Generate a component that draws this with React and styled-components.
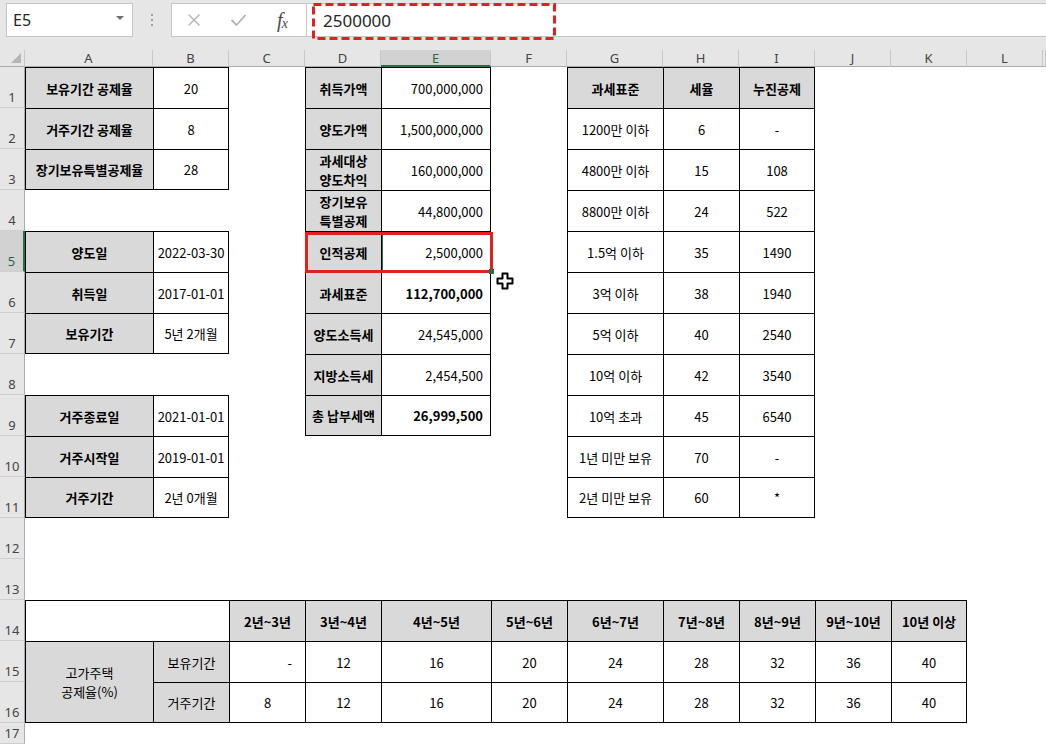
import React from 'react';
import styled, { createGlobalStyle } from 'styled-components';

const Global = createGlobalStyle`
  html, body { margin: 0; padding: 0; background: #fff; }
  body { font-family: "Noto Sans", "Noto Sans CJK KR", sans-serif; }
  * { box-sizing: border-box; }
`;

const COLS = ['A', 'B', 'C', 'D', 'E', 'F', 'G', 'H', 'I', 'J', 'K', 'L'];
const COL_W = [128, 76, 76, 76, 110, 76, 96, 76, 76, 76, 76, 76];
const SEL_COL = 5;
const SEL_ROW = 5;

const Page = styled.div`
  width: 1046px;
  height: 744px;
  overflow: hidden;
  position: relative;
  display: flex;
  flex-direction: column;
  background: #fff;
`;

const Toolbar = styled.div`
  height: 50px;
  flex: none;
  background: #e6e6e6;
  display: flex;
  align-items: flex-start;
  padding: 3px 0 0 6px;
`;

const NameBox = styled.div`
  width: 127px;
  height: 34px;
  background: #fff;
  border: 1px solid #c6c6c6;
  display: flex;
  align-items: center;
  justify-content: space-between;
  padding: 0 8px 0 6px;
  font-size: 16px;
  color: #262626;
`;

const Caret = styled.span`
  width: 0;
  height: 0;
  border-left: 4px solid transparent;
  border-right: 4px solid transparent;
  border-top: 4px solid #6f6f6f;
  margin-top: -4px;
`;

const Grip = styled.div`
  width: 38px;
  height: 34px;
  display: flex;
  flex-direction: column;
  align-items: center;
  justify-content: center;
  gap: 3px;
  span {
    width: 2px;
    height: 2px;
    background: #a0a0a0;
  }
`;

const FxBox = styled.div`
  width: 136px;
  height: 34px;
  background: #fff;
  border: 1px solid #c6c6c6;
  display: flex;
  align-items: center;
`;

const FxButton = styled.div`
  width: 44px;
  height: 34px;
  display: flex;
  align-items: center;
  justify-content: center;
`;

const FxLabel = styled.span`
  font-family: "Liberation Serif", "DejaVu Serif", serif;
  font-style: italic;
  font-size: 20px;
  color: #4a4a4a;
  letter-spacing: -1px;
  line-height: 1;
  sub {
    font-size: 14px;
    vertical-align: -1px;
  }
`;

const FormulaInput = styled.div`
  flex: 1;
  height: 34px;
  background: #fff;
  border: 1px solid #c6c6c6;
  border-right: 0;
  margin-left: -1px;
  position: relative;
  display: flex;
  align-items: center;
  padding-left: 16px;
  font-size: 17px;
  color: #262626;
`;

const DashedMark = styled.svg`
  position: absolute;
  left: 5px;
  top: -1px;
  width: 244px;
  height: 37px;
  overflow: visible;
`;

const Sheet = styled.div`
  flex: 1;
  display: grid;
  grid-template-columns: 25px ${COL_W.map((w) => w + 'px').join(' ')} 1fr;
  grid-template-rows: 17px repeat(16, 41px) 1fr;
  font-family: "Noto Sans CJK KR", "Noto Sans", sans-serif;
  font-size: 13px;
  color: #000;
  background: #fff;
  position: relative;
`;

const Corner = styled.div`
  grid-row: 1;
  grid-column: 1;
  background: #e6e6e6;
  border-right: 1px solid #c8c8c8;
  border-bottom: 1px solid #ababab;
  position: relative;
  &::after {
    content: '';
    position: absolute;
    right: 3px;
    bottom: 3px;
    width: 0;
    height: 0;
    border-left: 10px solid transparent;
    border-bottom: 10px solid #b6b6b6;
  }
`;

const ColHead = styled.div`
  grid-row: 1;
  grid-column: ${(p) => p.$c + 1};
  background: ${(p) => (p.$sel ? '#d2d2d2' : '#e6e6e6')};
  color: ${(p) => (p.$sel ? '#1e6b3f' : '#444')};
  border-right: 1px solid #c8c8c8;
  border-bottom: ${(p) => (p.$sel ? '2px solid #217346' : '1px solid #ababab')};
  font-family: "Noto Sans", sans-serif;
  font-size: 13px;
  display: flex;
  align-items: center;
  justify-content: center;
  line-height: 1;
  padding-top: ${(p) => (p.$sel ? '1px' : '0')};
`;

const RowHead = styled.div`
  grid-row: ${(p) => p.$r + 1};
  grid-column: 1;
  background: ${(p) => (p.$sel ? '#d2d2d2' : '#e6e6e6')};
  color: ${(p) => (p.$sel ? '#1e6b3f' : '#444')};
  border-right: ${(p) => (p.$sel ? '2px solid #217346' : '1px solid #ababab')};
  border-bottom: 1px solid #cfcfcf;
  font-family: "Noto Sans", sans-serif;
  font-size: 13px;
  line-height: 17px;
  display: flex;
  align-items: flex-end;
  justify-content: center;
  padding-bottom: 1px;
`;

const Cell = styled.div`
  grid-row: ${(p) => p.$r + 1} / span ${(p) => p.$rs || 1};
  grid-column: ${(p) => p.$c + 1} / span ${(p) => p.$cs || 1};
  display: flex;
  align-items: center;
  justify-content: ${(p) => (p.$align === 'right' ? 'flex-end' : 'center')};
  padding: ${(p) => (p.$align === 'right' ? `0 ${p.$pr || 7}px 0 2px` : '0 2px')};
  background: ${(p) => (p.$fill ? '#d9d9d9' : '#fff')};
  font-weight: ${(p) => (p.$bold ? 700 : 400)};
  text-align: center;
  white-space: pre-line;
  line-height: 19px;
  border-top: 1px solid #000;
  border-left: 1px solid #000;
  border-right: ${(p) => (p.$right ? '1px solid #000' : '0')};
  border-bottom: ${(p) => (p.$bottom ? '1px solid #000' : '0')};
  ${(p) => (p.$sel ? 'box-shadow: inset 1px 0 0 #217346;' : '')}
`;

const Selection = styled.div`
  grid-row: ${SEL_ROW + 1};
  grid-column: 5 / span 2;
  margin: 1px -2px -1px 0;
  border: 3px solid #e3201c;
  position: relative;
  z-index: 3;
  pointer-events: none;
`;

const FillHandle = styled.span`
  position: absolute;
  right: -4px;
  bottom: -4px;
  width: 5px;
  height: 5px;
  background: #217346;
`;

const Cursor = styled.svg`
  position: absolute;
  left: 496px;
  top: 272px;
  width: 18px;
  height: 18px;
  z-index: 5;
`;

/* ---------- data ---------- */

function block(r0, c0, rows, opts = {}) {
  const out = [];
  const lastR = r0 + rows.length - 1;
  rows.forEach((row, i) => {
    const lastC = c0 + row.length - 1;
    row.forEach((spec, j) => {
      const s = typeof spec === 'string' ? { t: spec } : spec;
      const r = r0 + i;
      const c = c0 + j;
      out.push({
        ...opts,
        ...s,
        r,
        c,
        right: c === lastC,
        bottom: r === lastR,
      });
    });
  });
  return out;
}

const L = (t) => ({ t, fill: true, bold: true });

const cells = [
  ...block(1, 1, [
    [L('보유기간 공제율'), '20'],
    [L('거주기간 공제율'), '8'],
    [L('장기보유특별공제율'), '28'],
  ]),
  ...block(5, 1, [
    [L('양도일'), '2022-03-30'],
    [L('취득일'), '2017-01-01'],
    [L('보유기간'), '5년 2개월'],
  ]),
  ...block(9, 1, [
    [L('거주종료일'), '2021-01-01'],
    [L('거주시작일'), '2019-01-01'],
    [L('거주기간'), '2년 0개월'],
  ]),
  ...block(1, 4, [
    [L('취득가액'), { t: '700,000,000', align: 'right' }],
    [L('양도가액'), { t: '1,500,000,000', align: 'right' }],
    [L('과세대상\n양도차익'), { t: '160,000,000', align: 'right' }],
    [L('장기보유\n특별공제'), { t: '44,800,000', align: 'right' }],
    [L('인적공제'), { t: '2,500,000', align: 'right', sel: true }],
    [L('과세표준'), { t: '112,700,000', align: 'right', bold: true }],
    [L('양도소득세'), { t: '24,545,000', align: 'right' }],
    [L('지방소득세'), { t: '2,454,500', align: 'right' }],
    [L('총 납부세액'), { t: '26,999,500', align: 'right', bold: true }],
  ]),
  ...block(1, 7, [
    [L('과세표준'), L('세율'), L('누진공제')],
    ['1200만 이하', '6', '-'],
    ['4800만 이하', '15', '108'],
    ['8800만 이하', '24', '522'],
    ['1.5억 이하', '35', '1490'],
    ['3억 이하', '38', '1940'],
    ['5억 이하', '40', '2540'],
    ['10억 이하', '42', '3540'],
    ['10억 초과', '45', '6540'],
    ['1년 미만 보유', '70', '-'],
    ['2년 미만 보유', '60', '*'],
  ]),
  { r: 14, c: 1, cs: 2, t: '' },
  ...['2년~3년', '3년~4년', '4년~5년', '5년~6년', '6년~7년', '7년~8년', '8년~9년', '9년~10년', '10년 이상'].map(
    (t, i) => ({ r: 14, c: 3 + i, t, fill: true, bold: true, right: i === 8 })
  ),
  { r: 15, c: 1, rs: 2, t: '고가주택\n공제율(%)', fill: true, bottom: true },
  { r: 15, c: 2, t: '보유기간', fill: true },
  { r: 16, c: 2, t: '거주기간', fill: true, bottom: true },
  ...['-', '12', '16', '20', '24', '28', '32', '36', '40'].map((t, i) => ({
    r: 15,
    c: 3 + i,
    t,
    align: i === 0 ? 'right' : undefined,
    pr: 13,
    right: i === 8,
  })),
  ...['8', '12', '16', '20', '24', '28', '32', '36', '40'].map((t, i) => ({
    r: 16,
    c: 3 + i,
    t,
    right: i === 8,
    bottom: true,
  })),
];

export default function App() {
  return (
    <Page>
      <Global />
      <Toolbar>
        <NameBox>
          <span>E5</span>
          <Caret />
        </NameBox>
        <Grip>
          <span />
          <span />
          <span />
        </Grip>
        <FxBox>
          <FxButton>
            <svg width="14" height="14" viewBox="0 0 14 14">
              <path d="M1.5 1.5 L12.5 12.5 M12.5 1.5 L1.5 12.5" stroke="#b3b3b3" strokeWidth="1.4" fill="none" />
            </svg>
          </FxButton>
          <FxButton>
            <svg width="17" height="14" viewBox="0 0 17 14">
              <path d="M1.5 7 L6.5 12 L15.5 2" stroke="#b3b3b3" strokeWidth="1.8" fill="none" />
            </svg>
          </FxButton>
          <FxButton>
            <FxLabel>
              f<sub>x</sub>
            </FxLabel>
          </FxButton>
        </FxBox>
        <FormulaInput>
          2500000
          <DashedMark viewBox="0 0 244 37">
            <rect x="1.5" y="1.5" width="241" height="34" fill="none" stroke="#e3201c" strokeWidth="3" strokeDasharray="8 4" />
          </DashedMark>
        </FormulaInput>
      </Toolbar>
      <Sheet>
        <Corner />
        {COLS.map((c, i) => (
          <ColHead key={c} $c={i + 1} $sel={i + 1 === SEL_COL}>
            {c}
          </ColHead>
        ))}
        <ColHead $c={13} />
        {Array.from({ length: 17 }, (_, i) => (
          <RowHead key={i} $r={i + 1} $sel={i + 1 === SEL_ROW}>
            {i + 1}
          </RowHead>
        ))}
        {cells.map((s, i) => (
          <Cell
            key={i}
            $r={s.r}
            $c={s.c}
            $rs={s.rs}
            $cs={s.cs}
            $fill={s.fill}
            $bold={s.bold}
            $align={s.align}
            $pr={s.pr}
            $right={s.right}
            $bottom={s.bottom}
            $sel={s.sel}
          >
            {s.t}
          </Cell>
        ))}
        <Selection>
          <FillHandle />
        </Selection>
      </Sheet>
      <Cursor viewBox="0 0 18 18">
        <path
          d="M6.5 1.5 H11.5 V6.5 H16.5 V11.5 H11.5 V16.5 H6.5 V11.5 H1.5 V6.5 H6.5 Z"
          fill="#fff"
          stroke="#000"
          strokeWidth="2"
          strokeLinejoin="round"
        />
      </Cursor>
    </Page>
  );
}
